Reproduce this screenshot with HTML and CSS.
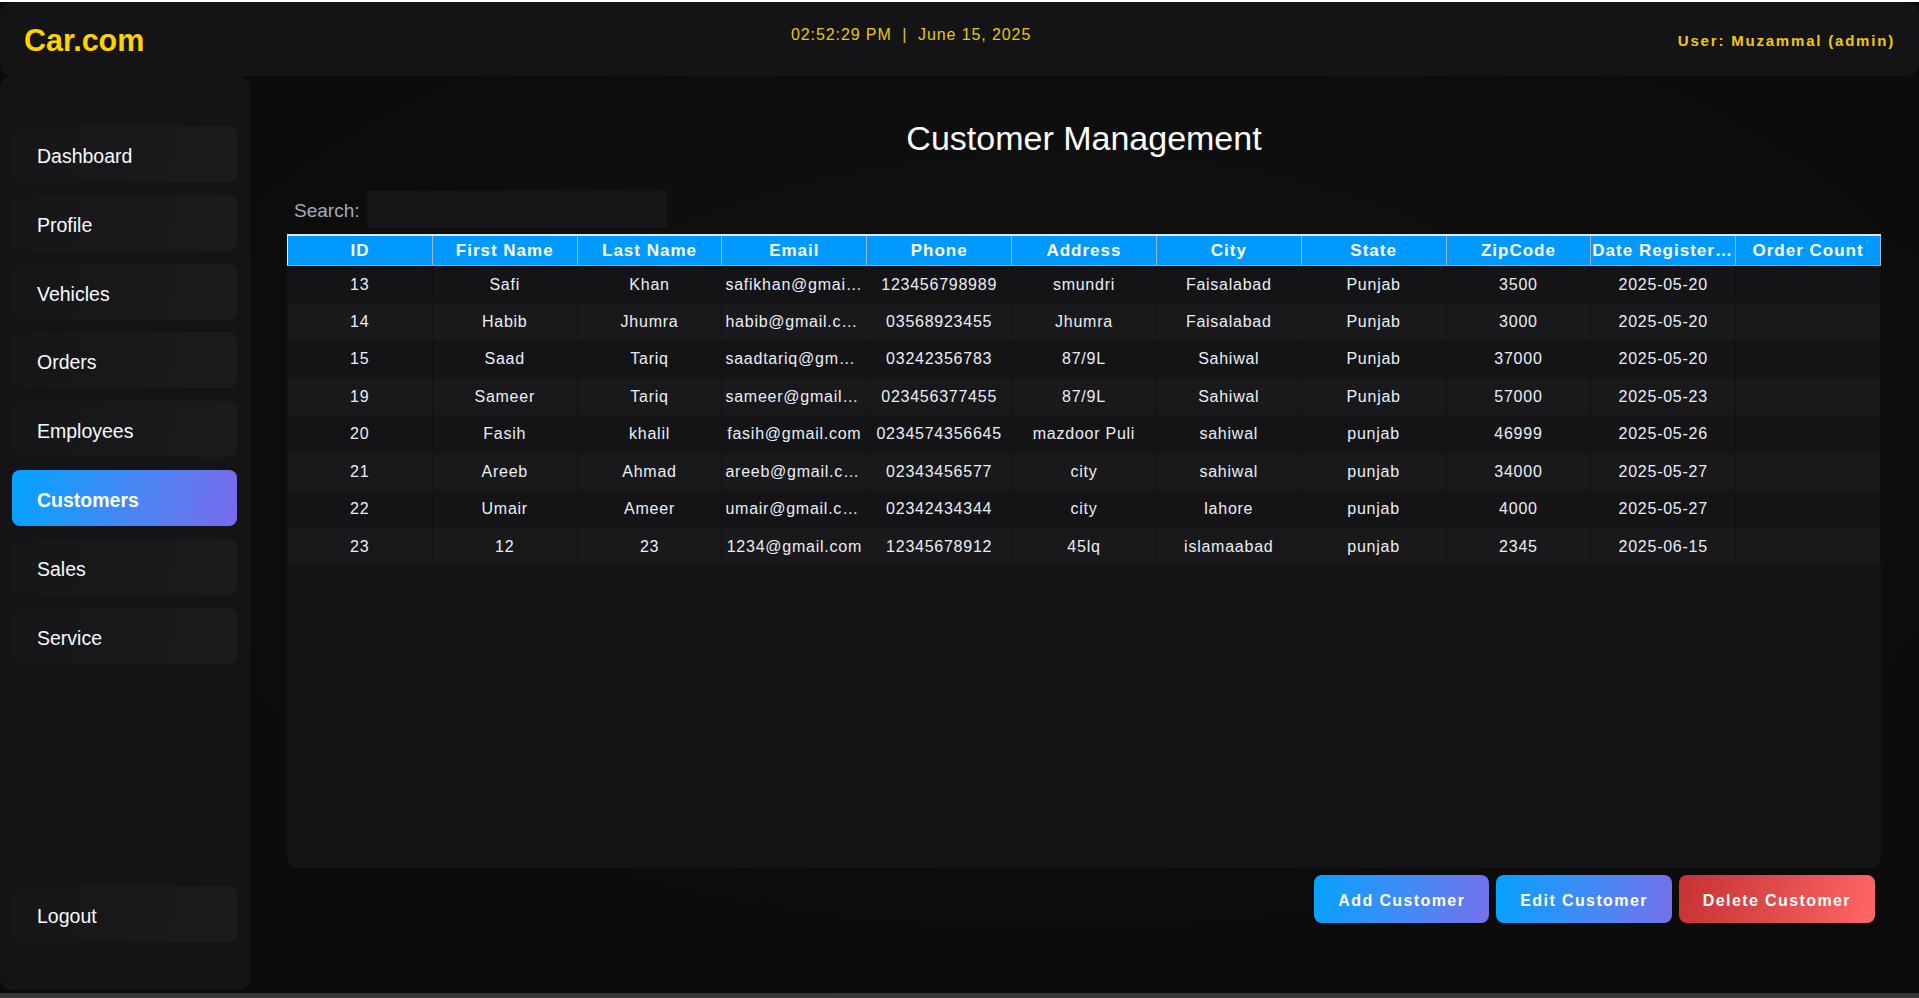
FILE: index.html
```html
<!DOCTYPE html>
<html lang="en">
<head>
<meta charset="utf-8">
<title>Car.com - Customer Management</title>
<link rel="stylesheet" href="styles.css">
</head>
<body>
<div class="app">
  <header class="topbar">
    <div class="logo">Car.com</div>
    <div class="clock">02:52:29 PM  |  June 15, 2025</div>
    <div class="user">User: Muzammal (admin)</div>
  </header>
  <div class="main">
    <nav class="sidebar">
      <a class="nav-item">Dashboard</a>
      <a class="nav-item">Profile</a>
      <a class="nav-item">Vehicles</a>
      <a class="nav-item">Orders</a>
      <a class="nav-item">Employees</a>
      <a class="nav-item active">Customers</a>
      <a class="nav-item">Sales</a>
      <a class="nav-item">Service</a>
      <a class="nav-item logout">Logout</a>
    </nav>
    <section class="content">
      <h1 class="title">Customer Management</h1>
      <div class="search-row">
        <label class="search-label" for="search">Search:</label>
        <input class="search-input" id="search" type="text">
      </div>
      <div class="table-panel">
        <table class="grid">
          <thead>
            <tr>
              <th>ID</th><th>First Name</th><th>Last Name</th><th>Email</th><th>Phone</th><th>Address</th><th>City</th><th>State</th><th>ZipCode</th><th>Date Registered</th><th>Order Count</th>
            </tr>
          </thead>
          <tbody>
            <tr><td>13</td><td>Safi</td><td>Khan</td><td>safikhan@gmail.com</td><td>123456798989</td><td>smundri</td><td>Faisalabad</td><td>Punjab</td><td>3500</td><td>2025-05-20</td><td></td></tr>
            <tr><td>14</td><td>Habib</td><td>Jhumra</td><td>habib@gmail.com</td><td>03568923455</td><td>Jhumra</td><td>Faisalabad</td><td>Punjab</td><td>3000</td><td>2025-05-20</td><td></td></tr>
            <tr><td>15</td><td>Saad</td><td>Tariq</td><td>saadtariq@gmail.com</td><td>03242356783</td><td>87/9L</td><td>Sahiwal</td><td>Punjab</td><td>37000</td><td>2025-05-20</td><td></td></tr>
            <tr><td>19</td><td>Sameer</td><td>Tariq</td><td>sameer@gmail.com</td><td>023456377455</td><td>87/9L</td><td>Sahiwal</td><td>Punjab</td><td>57000</td><td>2025-05-23</td><td></td></tr>
            <tr><td>20</td><td>Fasih</td><td>khalil</td><td>fasih@gmail.com</td><td>0234574356645</td><td>mazdoor Puli</td><td>sahiwal</td><td>punjab</td><td>46999</td><td>2025-05-26</td><td></td></tr>
            <tr><td>21</td><td>Areeb</td><td>Ahmad</td><td>areeb@gmail.com</td><td>02343456577</td><td>city</td><td>sahiwal</td><td>punjab</td><td>34000</td><td>2025-05-27</td><td></td></tr>
            <tr><td>22</td><td>Umair</td><td>Ameer</td><td>umair@gmail.com</td><td>02342434344</td><td>city</td><td>lahore</td><td>punjab</td><td>4000</td><td>2025-05-27</td><td></td></tr>
            <tr><td>23</td><td>12</td><td>23</td><td>1234@gmail.com</td><td>12345678912</td><td>45lq</td><td>islamaabad</td><td>punjab</td><td>2345</td><td>2025-06-15</td><td></td></tr>
          </tbody>
        </table>
      </div>
      <div class="actions">
        <button class="btn btn-blue">Add Customer</button>
        <button class="btn btn-blue">Edit Customer</button>
        <button class="btn btn-red">Delete Customer</button>
      </div>
    </section>
  </div>
</div>
</body>
</html>
```

FILE: styles.css
```css
* { box-sizing: border-box; }

html, body {
  margin: 0;
  padding: 0;
  background: #0c0c0d;
  font-family: "Liberation Sans", Arial, sans-serif;
}

.app {
  height: 998px;
  display: flex;
  flex-direction: column;
  border-top: 2px solid #ffffff;
  border-bottom: 5px solid #39393b;
  background: radial-gradient(ellipse at 55% 45%, #121213 0%, #0d0d0e 55%, #0a0a0a 100%);
  overflow: hidden;
}

/* ---------- top bar ---------- */
.topbar {
  height: 74px;
  flex: none;
  display: flex;
  align-items: center;
  justify-content: space-between;
  padding: 0 24px 0 24px;
  background: #141416;
  border-radius: 12px;
}

.logo {
  margin-top: 2px;
  color: #ffd200;
  font-size: 30.5px;
  font-weight: bold;
}

.clock {
  align-self: flex-start;
  margin-top: 23.5px;
  color: #e9c800;
  font-size: 16px;
  letter-spacing: 0.9px;
  white-space: pre;
}

.user {
  margin-top: 2px;
  color: #f2c900;
  font-size: 15px;
  font-weight: bold;
  letter-spacing: 1.8px;
}

/* ---------- main ---------- */
.main {
  flex: 1;
  display: flex;
  min-height: 0;
}

.sidebar {
  width: 250px;
  flex: none;
  margin-bottom: 3px;
  display: flex;
  flex-direction: column;
  gap: 12.8px;
  padding: 50px 13px 48px 12px;
  background: #141416;
  border-radius: 12px;
}

.nav-item {
  height: 56px;
  flex: none;
  display: flex;
  align-items: center;
  padding: 5px 0 0 25px;
  border-radius: 8px;
  background: linear-gradient(100deg, #161618 0%, #19191b 60%, #1b1b1d 100%);
  color: #f6f9ff;
  font-size: 19.5px;
  cursor: pointer;
}

.nav-item.active {
  background: linear-gradient(100deg, #03a3ff 0%, #4a86f4 55%, #786aeb 100%);
  color: #ffffff;
  font-weight: bold;
}

.nav-item.logout {
  margin-top: auto;
}

/* ---------- content ---------- */
.content {
  flex: 1;
  min-width: 0;
  display: flex;
  flex-direction: column;
  padding: 42px 38px 70px 37px;
}

.title {
  margin: 0;
  height: 40px;
  line-height: 40px;
  text-align: center;
  color: #ffffff;
  font-size: 34px;
  font-weight: normal;
}

.search-row {
  margin-top: 33px;
  height: 37px;
  display: flex;
  align-items: center;
  gap: 8px;
  padding-left: 7px;
}

.search-label {
  padding-top: 2px;
  color: #a3abbb;
  font-size: 19px;
}

.search-input {
  width: 300px;
  height: 37px;
  border: none;
  outline: none;
  background: #161618;
  color: #ffffff;
  font-family: inherit;
  font-size: 16px;
}

.table-panel {
  flex: 1;
  margin-top: 6px;
  background: #141416;
  border-radius: 0 0 10px 10px;
  overflow: hidden;
}

.grid {
  width: 100%;
  table-layout: fixed;
  border-collapse: collapse;
}

.grid th {
  height: 30px;
  padding: 2px 1px 0;
  background: #0099ff;
  color: #ffffff;
  font-size: 17px;
  font-weight: bold;
  letter-spacing: 1px;
  text-align: center;
  white-space: nowrap;
  overflow: hidden;
  text-overflow: ellipsis;
  border-top: 2px solid #dce9f4;
  border-bottom: 1px solid #8ea7bd;
  border-left: 1px solid #e3eef8;
  border-right: 1px solid #9fb6ca;
}

.grid td {
  height: 37.5px;
  padding: 1px 3px 0;
  color: #eaeef6;
  font-size: 16px;
  letter-spacing: 0.75px;
  text-align: center;
  white-space: nowrap;
  overflow: hidden;
  text-overflow: ellipsis;
  border-right: 1px solid #111113;
}

.grid tbody tr:nth-child(odd) { background: #141416; }
.grid tbody tr:nth-child(even) { background: #19191b; }

/* ---------- actions ---------- */
.actions {
  margin-top: 7px;
  height: 48px;
  display: flex;
  justify-content: flex-end;
  gap: 7px;
  padding-right: 6px;
}

.btn {
  height: 48px;
  padding: 4px 24px 0;
  border: none;
  border-radius: 8px;
  color: #ffffff;
  font-family: inherit;
  font-size: 16px;
  font-weight: bold;
  letter-spacing: 1.4px;
  cursor: pointer;
}

.btn-blue {
  background: linear-gradient(100deg, #04a2fe 0%, #3f8cf6 50%, #7670ea 100%);
}

.btn-red {
  background: linear-gradient(100deg, #c83234 0%, #e04b4d 50%, #ff6666 100%);
}
```
